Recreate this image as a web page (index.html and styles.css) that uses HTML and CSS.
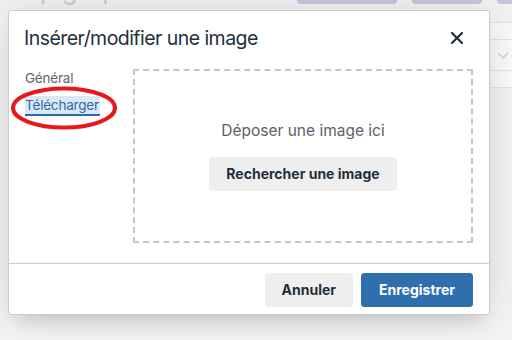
FILE: index.html
```html
<!DOCTYPE html>
<html lang="fr">
<head>
  <meta charset="UTF-8" />
  <meta name="viewport" content="width=device-width, initial-scale=1.0" />
  <title>Insérer/modifier une image</title>
  <link rel="stylesheet" href="styles.css">
</head>
<body>
  <div class="page">
    <div class="topbar">
      <span class="crumb">Epigraphe</span>
      <div class="pills">
        <span class="pill pill-wide"></span>
        <span class="pill pill-mid"></span>
        <span class="pill pill-small"></span>
      </div>
    </div>
    <div class="panel">
      <div class="panel-row"></div>
      <div class="panel-row tall">
        <svg class="chevron" width="12" height="7" viewBox="0 0 12 7"><path d="M1 1l5 5 5-5" fill="none" stroke="#d6d6d6" stroke-width="1.5"/></svg>
      </div>
      <div class="panel-row"></div>
    </div>
  </div>

  <div class="dialog">
    <div class="dialog-header">
      <h1>Insérer/modifier une image</h1>
      <button class="close" aria-label="Fermer">
        <svg width="12" height="12" viewBox="0 0 12 12"><path d="M1 1l10 10M11 1L1 11" stroke="#222f3e" stroke-width="2.2" stroke-linecap="square"/></svg>
      </button>
    </div>

    <div class="dialog-body">
      <div class="tabs">
        <div class="tab">Général</div>
        <div class="tab active">Télécharger</div>
      </div>
      <div class="dropzone">
        <p class="drop-text">Déposer une image ici</p>
        <button class="btn">Rechercher une image</button>
      </div>
    </div>

    <div class="dialog-footer">
      <button class="btn">Annuler</button>
      <button class="btn primary">Enregistrer</button>
    </div>
  </div>

  <svg class="marker" width="110" height="46" viewBox="0 0 110 46">
    <ellipse cx="54" cy="22" rx="51" ry="19.5" fill="none" stroke="#e8171b" stroke-width="4"/>
  </svg>
</body>
</html>
```

FILE: styles.css
```css
body {
  margin: 0;
  background-color: #f4f4f4;
  font-family: Inter, 'Noto Sans', sans-serif;
  color: #222f3e;
  width: 512px;
  height: 340px;
  overflow: hidden;
}

.page {
  display: flex;
  flex-direction: column;
  height: 340px;
}

.topbar {
  display: flex;
  align-items: flex-start;
  height: 20px;
}

.crumb {
  margin: -25px 0 0 24px;
  font-size: 26px;
  color: #cdcdcd;
  line-height: 30px;
}

.pills {
  display: flex;
  gap: 15px;
  margin-left: auto;
  margin-right: -25px;
}

.pill {
  height: 4px;
  background-color: #cac8e2;
  border-radius: 0 0 10px 10px;
}

.pill-wide {
  width: 100px;
}

.pill-mid {
  width: 70px;
}

.pill-small {
  width: 40px;
}

.panel {
  margin: 2px 0 0 auto;
  width: 80px;
  background-color: #fbfbfb;
  border-top: 1px solid #e6e6e6;
}

.panel-row {
  height: 16px;
  border-bottom: 1px solid #e6e6e6;
}

.panel-row.tall {
  height: 30px;
  display: flex;
  align-items: center;
  justify-content: flex-end;
  padding-right: 3px;
}

.dialog {
  position: absolute;
  left: 8px;
  top: 10px;
  width: 480px;
  height: 303px;
  background-color: #fff;
  border: 1px solid #cccccc;
  border-radius: 3px;
  box-shadow: 0 16px 16px -10px rgba(34, 47, 62, 0.15), 0 0 40px 1px rgba(34, 47, 62, 0.15);
  display: flex;
  flex-direction: column;
}

.dialog-header {
  display: flex;
  align-items: center;
  justify-content: space-between;
  padding: 14px 16px 0 15px;
  height: 26px;
}

h1 {
  margin: 0;
  font-size: 19.5px;
  font-weight: 400;
  letter-spacing: -0.55px;
  color: #222f3e;
}

.close {
  background: none;
  border: none;
  padding: 0;
  margin-right: 10px;
  width: 12px;
  height: 12px;
  display: flex;
}

.dialog-body {
  display: flex;
  flex: 1;
  padding: 18px 16px 20px 16px;
}

.tabs {
  display: flex;
  flex-direction: column;
  align-items: flex-start;
  width: 108px;
}

.tab {
  font-size: 13.5px;
  line-height: 18px;
  color: #5c6670;
  padding: 0 1px 0 0;
  margin-bottom: 9px;
  letter-spacing: -0.2px;
}

.tab.active {
  color: #2a6bb0;
  background-color: #dde8f3;
  border-bottom: 2px solid #2a6bb0;
  padding: 0 1px 0 0;
}

.dropzone {
  flex: 1;
  border: 2px dashed #c6c6c6;
  display: flex;
  flex-direction: column;
  align-items: center;
  justify-content: center;
}

.drop-text {
  margin: 0 0 16px 0;
  font-size: 15.5px;
  line-height: 20px;
  color: #5c6169;
}

.btn {
  font-family: Inter, 'Noto Sans', sans-serif;
  font-size: 14px;
  font-weight: 700;
  line-height: 24px;
  padding: 4px 16px;
  border: 1px solid #efefef;
  border-radius: 3px;
  background-color: #efefef;
  color: #222f3e;
}

.dropzone .btn {
  width: 188px;
}

.dialog-footer {
  display: flex;
  justify-content: flex-end;
  gap: 8px;
  padding: 9px 16px 7px 16px;
  border-top: 1px solid #cccccc;
}

.dialog-footer .btn {
  min-width: 88px;
}

.btn.primary {
  background-color: #306fae;
  border-color: #306fae;
  color: #fff;
  width: 112px;
}

.marker {
  position: absolute;
  left: 10px;
  top: 86px;
}
```
